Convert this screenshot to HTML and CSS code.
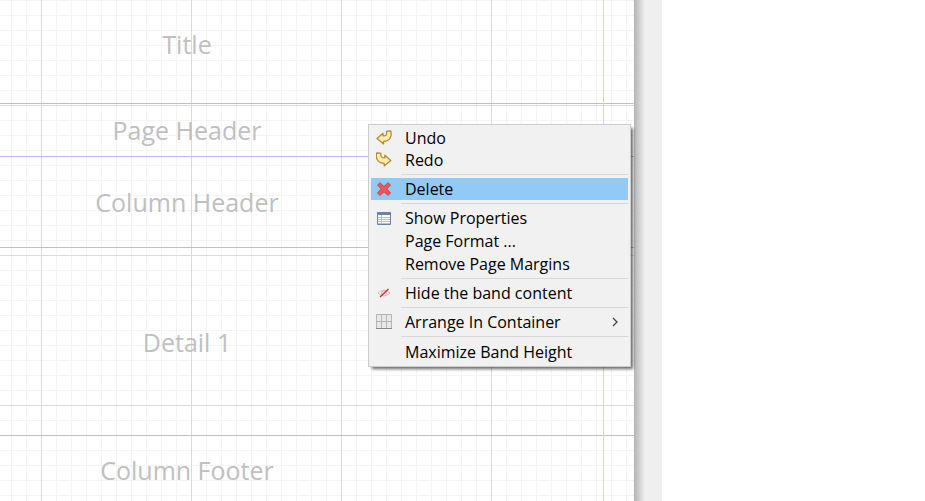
FILE: index.html
```
<!DOCTYPE html>
<html lang="en">
<head>
    <meta charset="UTF-8">
    <title>Report Designer</title>
    <link rel="stylesheet" href="styles.css">
</head>
<body>
    <div class="editor">
        <main class="page">
            <div class="margin_line"></div>
            <section class="band title_band"><h2>Title</h2></section>
            <section class="band page_header"><h2>Page Header</h2></section>
            <section class="band column_header"><h2>Column Header</h2></section>
            <section class="band detail"><h2>Detail 1</h2></section>
            <section class="band column_footer"><h2>Column Footer</h2></section>
        </main>
        <div class="gutter"></div>
        <div class="blank"></div>
    </div>
    <div class="menu" role="menu">
        <button class="item" role="menuitem">
            <svg class="icon" viewBox="0 0 16 16"><path d="M1 8.5L7 3.2V6C10 6 11.4 4.4 10.4 1.4L14.6 .8C16.4 6 14 11.4 7.6 11.4V14Z" fill="#fdebb0" stroke="#b5852f" stroke-width="1.2" stroke-linejoin="round"/></svg>
            <span>Undo</span>
        </button>
        <button class="item" role="menuitem">
            <svg class="icon" viewBox="0 0 16 16"><path d="M14.8 8.5L8.8 3.2V6C5.8 6 4.2 4.4 5 1.4L.8 .8C-.8 6 1.6 11.4 8.2 11.4V14Z" fill="#fdebb0" stroke="#b5852f" stroke-width="1.2" stroke-linejoin="round"/></svg>
            <span>Redo</span>
        </button>
        <hr>
        <button class="item active" role="menuitem">
            <svg class="icon" viewBox="0 0 16 16"><path d="M4 1.8L8 5.4L12 1.8L14.6 4L10.8 8L14.6 12L12 14.4L8 10.8L4 14.4L1.5 12L5.2 8L1.5 4Z" fill="#ee5555" stroke="#cf4450" stroke-linejoin="round"/></svg>
            <span>Delete</span>
        </button>
        <hr>
        <button class="item" role="menuitem">
            <svg class="icon" viewBox="0 0 16 16"><path d="M1.5 2.5H14.5V14.5H1.5Z" fill="#fff" stroke="#6f83a3"/><path d="M1 2H15V5H1Z" fill="#6f83a3"/><path d="M2 7.5H14M2 9.5H14M2 11.5H14M2 13.5H14M5.5 5V14" stroke="#b3c0cf"/></svg>
            <span>Show Properties</span>
        </button>
        <button class="item plain" role="menuitem"><span>Page Format ...</span></button>
        <button class="item plain" role="menuitem"><span>Remove Page Margins</span></button>
        <hr>
        <button class="item" role="menuitem">
            <svg class="icon" viewBox="0 0 16 16"><path d="M2 8Q8 2 14 8Q8 14 2 8Z" fill="#f3f3f3" stroke="#c4c4c4"/><circle cx="8" cy="8" r="2.5" fill="#e4e4e4" stroke="#c4c4c4"/><path d="M4 12L12.5 4" stroke="#ec2024" stroke-width="1.3"/></svg>
            <span>Hide the band content</span>
        </button>
        <hr>
        <button class="item" role="menuitem" aria-haspopup="true">
            <svg class="icon" viewBox="0 0 16 16"><path d="M.5 .5H15.5V14.5H.5Z" fill="#e9e9e9" stroke="#b5b5b5"/><path d="M5.5 1V14M10.5 1V14M1 7.5H15" stroke="#b5b5b5"/><path d="M0 14.5H16" stroke="#888"/></svg>
            <span>Arrange In Container</span>
            <svg class="arrow" viewBox="0 0 6 10"><path d="M1 1L5 5L1 9" fill="none" stroke="#444" stroke-width="1.3"/></svg>
        </button>
        <hr>
        <button class="item plain" role="menuitem"><span>Maximize Band Height</span></button>
    </div>
</body>
</html>
```
FILE: styles.css
```
* {
    box-sizing: border-box;
    margin: 0;
    padding: 0;
}
body {
    font-family: "Open Sans", "Noto Sans", sans-serif;
    background-color: #fff;
    overflow: hidden;
}
.editor {
    display: flex;
    height: 100vh;
}
/* report page with its grid: 15px cells, a darker line every 150px */
.page {
    display: flex;
    flex-direction: column;
    position: relative;
    flex: 1;
    overflow: hidden;
    background-color: #fff;
    background-image:
        linear-gradient(to right, #dadada 1px, transparent 1px),
        linear-gradient(#dadada 1px, transparent 1px),
        linear-gradient(to right, #f4f4f4 1px, transparent 1px),
        linear-gradient(#f4f4f4 1px, transparent 1px);
    background-size: 150px 150px, 150px 150px, 15px 15px, 15px 15px;
    background-position: 41px 0, 0 105px, 11px 0, 0 0;
}
.margin_line {
    position: absolute;
    top: 0;
    bottom: 0;
    right: 30px;
    border-left: 1px solid #d0d0fb;
}
.band {
    display: flex;
    flex-shrink: 0;
    align-items: center;
    justify-content: center;
    padding-right: 260px;
    border-bottom: 1px solid #b9b9fa;
}
.band h2 {
    font-size: 25px;
    font-weight: normal;
    line-height: 32px;
    color: #c0c0c0;
    white-space: nowrap;
}
.title_band {
    height: 104px;
    padding-bottom: 15px;
}
.page_header {
    height: 53px;
}
.column_header {
    height: 91px;
}
.detail {
    height: 188px;
}
.column_footer {
    height: 68px;
}
.gutter {
    width: 28px;
    background: linear-gradient(to right, #b4b4b4, #efefef 11px);
}
.blank {
    width: 263px;
}
/* context menu */
.menu {
    position: absolute;
    top: 124px;
    left: 368px;
    width: 263px;
    padding: 2px 2px 3px;
    border: 1px solid #ccc;
    background-color: #f1f1f1;
    box-shadow: 3px 3px 3px -1px rgba(0, 0, 0, 0.6);
}
.item {
    display: flex;
    align-items: center;
    width: 100%;
    height: 22px;
    padding: 0 10px 0 5px;
    border: none;
    background: none;
    font-family: inherit;
    font-size: 16px;
    line-height: 22px;
    color: #000;
    text-align: left;
    white-space: nowrap;
}
.item span {
    flex: 1;
    margin-left: 13px;
}
.plain {
    height: 23px;
    padding-left: 21px;
}
.active {
    background-color: #91c9f7;
}
.icon {
    width: 16px;
    height: 16px;
}
.arrow {
    width: 6px;
    height: 10px;
}
.menu hr {
    height: 1px;
    margin: 3px 0 3px 30px;
    border: none;
    background-color: #d7d7d7;
}
```
